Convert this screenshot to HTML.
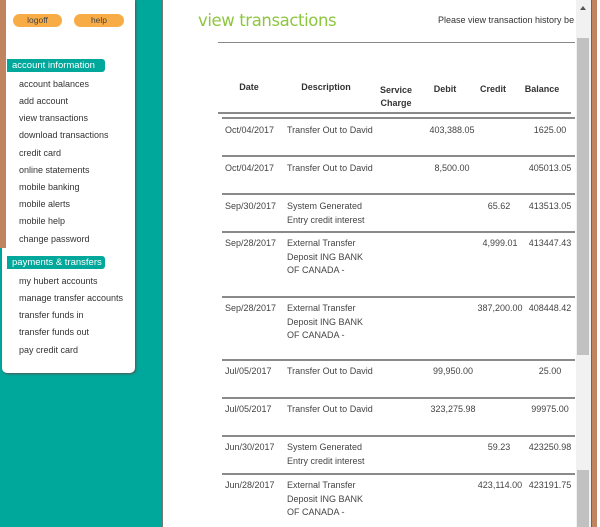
<!DOCTYPE html>
<html><head><style>
*{margin:0;padding:0;box-sizing:border-box}
body{width:600px;height:527px;overflow:hidden;background:#fff;font-family:"Liberation Sans",Arial,sans-serif;position:relative}
.a{position:absolute;white-space:nowrap}
.teal{background:#00a79b}
.m{font-size:9px;color:#333;left:19px}
.hd{left:7px;width:98px;height:13px;background:#00a79b;color:#fff;font-size:9.5px;padding-left:5px;line-height:13px;border-radius:0 3px 3px 0}
.btn{height:13px;background:#f8ac45;border-radius:7px;font-size:8.5px;color:#444;text-align:center;line-height:13px}
.t{font-size:9px;color:#444}
.h{font-size:9px;color:#333;font-weight:bold;text-align:center}
.ln{position:absolute;left:222px;width:353px;height:2px;background:#8a8a8a}
.c{text-align:center;width:80px}
</style></head><body>
<div class="a teal" style="left:0;top:0;width:163px;height:527px"></div>
<div class="a" style="left:162px;top:0;width:1px;height:527px;background:#777"></div>
<div class="a" style="left:2px;top:0;width:133px;height:373px;background:#fff;border-radius:0 0 5px 5px;box-shadow:1px 1px 2px #555"></div>
<div class="a" style="left:0;top:0;width:6px;height:248px;background:#c08461"></div>
<div class="a btn" style="left:13px;top:14px;width:49px">logoff</div>
<div class="a btn" style="left:74px;top:14px;width:50px">help</div>
<div class="a hd" style="top:59px">account information</div>
<div class="a m" style="top:79px">account balances</div>
<div class="a m" style="top:96px">add account</div>
<div class="a m" style="top:113px">view transactions</div>
<div class="a m" style="top:130px">download transactions</div>
<div class="a m" style="top:148px">credit card</div>
<div class="a m" style="top:165px">online statements</div>
<div class="a m" style="top:182px">mobile banking</div>
<div class="a m" style="top:199px">mobile alerts</div>
<div class="a m" style="top:216px">mobile help</div>
<div class="a m" style="top:234px">change password</div>
<div class="a hd" style="top:256px">payments &amp; transfers</div>
<div class="a m" style="top:276px">my hubert accounts</div>
<div class="a m" style="top:293px">manage transfer accounts</div>
<div class="a m" style="top:310px">transfer funds in</div>
<div class="a m" style="top:327px">transfer funds out</div>
<div class="a m" style="top:345px">pay credit card</div>

<div class="a" style="left:198px;top:11px;font-size:16.5px;color:#8dc63f;letter-spacing:-0.4px;font-family:'DejaVu Sans',sans-serif">view transactions</div>
<div class="a t" style="left:438px;top:15px;color:#333">Please view transaction history be</div>
<div class="a" style="left:218px;top:42px;width:357px;height:1px;background:#888"></div>

<div class="a h" style="left:229px;top:82px;width:40px">Date</div>
<div class="a h" style="left:296px;top:82px;width:60px">Description</div>
<div class="a h" style="left:376px;top:84px;width:40px;line-height:13px">Service<br>Charge</div>
<div class="a h" style="left:425px;top:84px;width:40px">Debit</div>
<div class="a h" style="left:473px;top:84px;width:40px">Credit</div>
<div class="a h" style="left:517px;top:84px;width:50px">Balance</div>
<div class="ln" style="top:112px;left:218px"></div>
<div class="ln" style="top:117px"></div>
<div class="ln" style="top:155px"></div>
<div class="ln" style="top:193px"></div>
<div class="ln" style="top:231px"></div>
<div class="ln" style="top:296px"></div>
<div class="ln" style="top:359px"></div>
<div class="ln" style="top:397px"></div>
<div class="ln" style="top:435px"></div>
<div class="ln" style="top:473px"></div>

<div style="position:absolute;left:0;top:0;font-size:9px;color:#444;line-height:13.5px">
<div class="a" style="left:225px;top:124px">Oct/04/2017</div><div class="a" style="left:287px;top:124px">Transfer Out to David</div><div class="a c" style="left:412px;top:124px">403,388.05</div><div class="a c" style="left:510px;top:124px">1625.00</div>
<div class="a" style="left:225px;top:162px">Oct/04/2017</div><div class="a" style="left:287px;top:162px">Transfer Out to David</div><div class="a c" style="left:412px;top:162px">8,500.00</div><div class="a c" style="left:510px;top:162px">405013.05</div>
<div class="a" style="left:225px;top:200px">Sep/30/2017</div><div class="a" style="left:287px;top:200px">System Generated<br>Entry credit interest</div><div class="a c" style="left:459px;top:200px">65.62</div><div class="a c" style="left:510px;top:200px">413513.05</div>
<div class="a" style="left:225px;top:237px">Sep/28/2017</div><div class="a" style="left:287px;top:237px">External Transfer<br>Deposit ING BANK<br>OF CANADA -</div><div class="a c" style="left:460px;top:237px">4,999.01</div><div class="a c" style="left:510px;top:237px">413447.43</div>
<div class="a" style="left:225px;top:302px">Sep/28/2017</div><div class="a" style="left:287px;top:302px">External Transfer<br>Deposit ING BANK<br>OF CANADA -</div><div class="a c" style="left:460px;top:302px">387,200.00</div><div class="a c" style="left:510px;top:302px">408448.42</div>
<div class="a" style="left:225px;top:365px">Jul/05/2017</div><div class="a" style="left:287px;top:365px">Transfer Out to David</div><div class="a c" style="left:413px;top:365px">99,950.00</div><div class="a c" style="left:510px;top:365px">25.00</div>
<div class="a" style="left:225px;top:403px">Jul/05/2017</div><div class="a" style="left:287px;top:403px">Transfer Out to David</div><div class="a c" style="left:413px;top:403px">323,275.98</div><div class="a c" style="left:510px;top:403px">99975.00</div>
<div class="a" style="left:225px;top:441px">Jun/30/2017</div><div class="a" style="left:287px;top:441px">System Generated<br>Entry credit interest</div><div class="a c" style="left:459px;top:441px">59.23</div><div class="a c" style="left:510px;top:441px">423250.98</div>
<div class="a" style="left:225px;top:479px">Jun/28/2017</div><div class="a" style="left:287px;top:479px">External Transfer<br>Deposit ING BANK<br>OF CANADA -</div><div class="a c" style="left:460px;top:479px">423,114.00</div><div class="a c" style="left:510px;top:479px">423191.75</div>
</div>

<div class="a" style="left:576px;top:0;width:15px;height:527px;background:#f1f1f1"></div>
<div class="a" style="left:580px;top:6px;width:0;height:0;border-left:3px solid transparent;border-right:3px solid transparent;border-bottom:4px solid #555"></div>
<div class="a" style="left:577px;top:38px;width:12px;height:317px;background:#c1c1c1"></div>
<div class="a" style="left:577px;top:470px;width:12px;height:57px;background:#c1c1c1"></div>
<div class="a" style="left:591px;top:0;width:6px;height:527px;background:#c08461;border-left:1px solid #8a5a3c"></div>
</body></html>
